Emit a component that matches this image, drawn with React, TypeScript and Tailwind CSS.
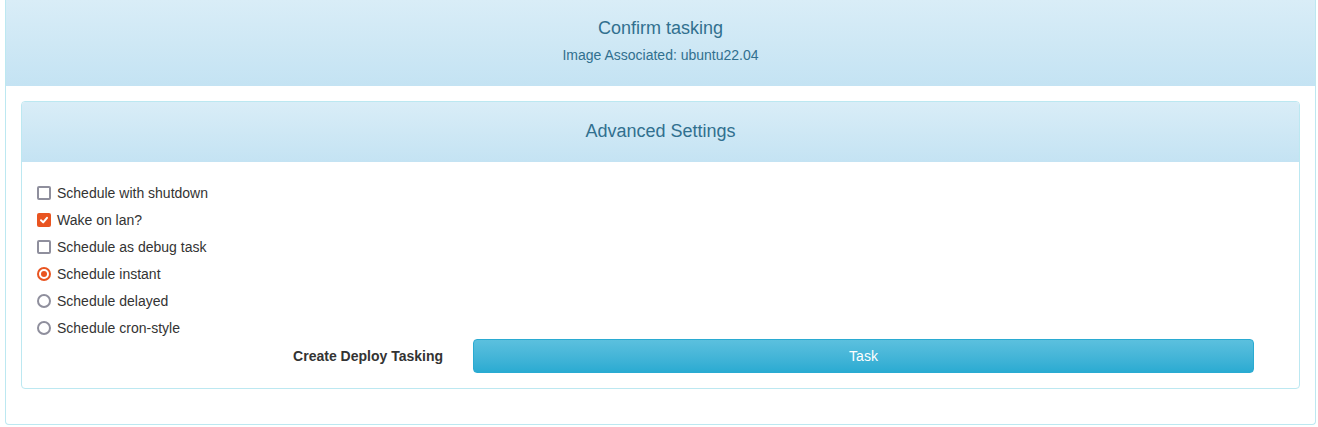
import React from 'react';

const options = [
  { type: 'checkbox', label: 'Schedule with shutdown', checked: false },
  { type: 'checkbox', label: 'Wake on lan?', checked: true },
  { type: 'checkbox', label: 'Schedule as debug task', checked: false },
  { type: 'radio', label: 'Schedule instant', checked: true },
  { type: 'radio', label: 'Schedule delayed', checked: false },
  { type: 'radio', label: 'Schedule cron-style', checked: false },
];

function Box({ type, checked }: { type: string; checked: boolean }) {
  if (type === 'radio') {
    return checked ? (
      <span className="w-[14px] h-[14px] rounded-full border-2 border-[#e95420] flex items-center justify-center">
        <span className="w-[6px] h-[6px] rounded-full bg-[#e95420]" />
      </span>
    ) : (
      <span className="w-[14px] h-[14px] rounded-full border-2 border-[#8f8f9d]" />
    );
  }
  return checked ? (
    <span className="w-[14px] h-[14px] rounded-[2px] bg-[#e95420] flex items-center justify-center">
      <svg width="10" height="10" viewBox="0 0 10 10" fill="none" stroke="white" strokeWidth="2" strokeLinecap="round" strokeLinejoin="round">
        <path d="M2 5.2 4.2 7.4 8 2.8" />
      </svg>
    </span>
  ) : (
    <span className="w-[14px] h-[14px] rounded-[2px] border-2 border-[#8f8f9d]" />
  );
}

export default function App() {
  return (
    <div className="h-[427px] bg-white font-['Liberation_Sans',Arial,sans-serif] text-[14px] text-[#333]">
      <div className="ml-[5px] w-[1311px] border-x border-b border-[#bce8f1] rounded-b-[4px]">
        <div className="h-[86px] bg-gradient-to-b from-[#d9edf7] to-[#c4e3f3] text-[#31708f] text-center pt-[17px]">
          <h3 className="text-[18px] leading-[22px]">Confirm tasking</h3>
          <p className="mt-[6px] text-[14px] leading-[20px]">Image Associated: ubuntu22.04</p>
        </div>

        <div className="p-[15px]">
          <div className="mb-[20px] border border-[#bce8f1] rounded-[4px]">
            <div className="h-[60px] pb-[2px] flex items-center justify-center rounded-t-[3px] bg-gradient-to-b from-[#d9edf7] to-[#c4e3f3] text-[#31708f] text-[18px]">
              Advanced Settings
            </div>
            <div className="px-[15px] pt-[17px] pb-[15px]">
              {options.map((o) => (
                <label key={o.label} className="flex items-center h-[27px] leading-[20px]">
                  <Box type={o.type} checked={o.checked} />
                  <span className="ml-[6px]">{o.label}</span>
                </label>
              ))}
              <div className="flex items-center -mt-[2px]">
                <div className="w-[406px] text-right font-bold">Create Deploy Tasking</div>
                <button className="ml-[30px] w-[781px] h-[34px] rounded-[4px] border border-[#2aabd2] bg-gradient-to-b from-[#5bc0de] to-[#2aabd2] text-white text-[14px]">
                  Task
                </button>
              </div>
            </div>
          </div>
        </div>
      </div>
    </div>
  );
}
